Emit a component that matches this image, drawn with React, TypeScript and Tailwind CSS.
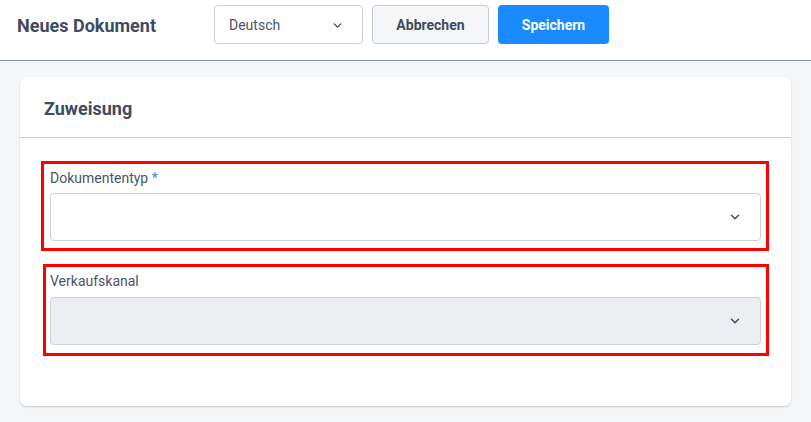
import { ChevronDown } from 'lucide-react';

// Red annotation frame drawn over a form field.
function Marker({ className }: { className: string }) {
  return <div className={`pointer-events-none absolute border-[3px] border-[#ff0000] ${className}`} />;
}

function SelectBox({ disabled }: { disabled?: boolean }) {
  return (
    <div
      className={`flex h-[48px] items-center justify-end rounded-[4px] border border-[#cbd2db] pr-[18px] ${
        disabled ? 'bg-[#edeef1]' : 'bg-white'
      }`}
    >
      <ChevronDown size={14} strokeWidth={2.5} className="text-[#3d4b5f]" />
    </div>
  );
}

export default function App() {
  return (
    <div className="min-h-[422px] bg-[#f5f6f8] font-['Roboto',sans-serif] text-[#3d4b5f]">
      <header className="flex h-[61px] items-start border-b border-[#8796ab] bg-white pl-[17px] pt-[5px]">
        <h1 className="mt-[9px] w-[197px] text-[18px] font-bold leading-[24px] text-[#3d4b5f]">Neues Dokument</h1>
        <div className="flex h-[39px] w-[149px] items-center justify-between rounded-[4px] border border-[#c9d0d9] bg-white pl-[14px] pr-[18px] pt-[2px] text-[14px] text-[#4a5568]">
          <span>Deutsch</span>
          <ChevronDown size={13} strokeWidth={2.5} className="text-[#3d4b5f]" />
        </div>
        <button className="ml-[9px] h-[39px] w-[117px] rounded-[4px] border border-[#c3cad4] bg-[#f5f6f8] pt-[2px] text-[14px] font-bold text-[#3d4b5f]">
          Abbrechen
        </button>
        <button className="ml-[9px] h-[39px] w-[111px] rounded-[4px] bg-[#1a8aff] pt-[2px] text-[14px] font-bold text-white">
          Speichern
        </button>
      </header>

      <div className="px-[20px] pt-[16px]">
        <section className="rounded-[7px] bg-white shadow-[0_1px_2px_rgba(0,0,0,0.18)]">
          <div className="flex h-[61px] items-center border-b border-[#c9d0d9] pl-[24px]">
            <h2 className="pt-[2px] text-[18px] font-bold text-[#3d4b5f]">Zuweisung</h2>
          </div>
          <div className="flex flex-col gap-[30px] px-[30px] pb-[61px] pt-[30px]">
            <div className="relative">
              <Marker className="-left-[9px] -right-[8px] -top-[7px] -bottom-[10px]" />
              <label className="block text-[14px] leading-[20px] text-[#4a5568]">
                Dokumententyp <span className="text-[#1a8aff]">*</span>
              </label>
              <div className="mt-[5px]">
                <SelectBox />
              </div>
            </div>
            <div className="relative">
              <Marker className="-left-[7px] -right-[8px] -top-[7px] -bottom-[11px]" />
              <label className="block text-[14px] leading-[20px] text-[#4a5568]">Verkaufskanal</label>
              <div className="mt-[6px]">
                <SelectBox disabled />
              </div>
            </div>
          </div>
        </section>
      </div>
    </div>
  );
}
